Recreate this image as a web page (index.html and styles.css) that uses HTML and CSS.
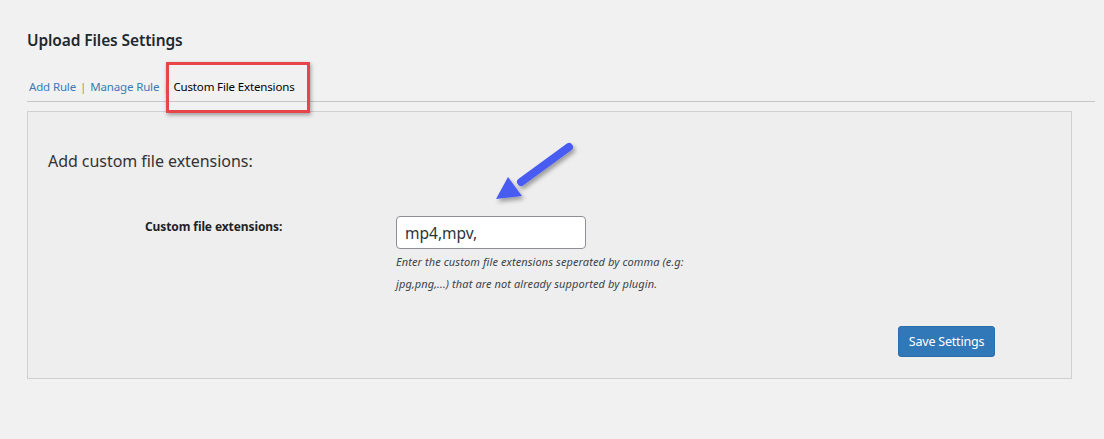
FILE: index.html
```html
<!DOCTYPE html>
<html>
<head>
<meta charset="utf-8">
<link rel="stylesheet" href="styles.css">
</head>
<body>
<div class="wrap">
  <h1 class="title">Upload Files Settings</h1>
  <nav class="tabs">
    <a class="tab" href="#">Add Rule</a><span class="sep">|</span><a class="tab" href="#">Manage Rule</a><span class="sep">|</span><span class="tab current">Custom File Extensions<span class="highlight"></span></span>
  </nav>
  <div class="panel">
    <h2 class="heading">Add custom file extensions:</h2>
    <div class="form-row">
      <label class="label" for="ext">Custom file extensions:</label>
      <div class="field">
        <input id="ext" class="input" type="text" value="mp4,mpv,">
        <p class="desc">Enter the custom file extensions seperated by comma (e.g:<br>jpg,png,...) that are not already supported by plugin.</p>
      </div>
    </div>
    <div class="actions">
      <button class="btn">Save Settings</button>
    </div>
    <svg class="arrow" width="100" height="80" viewBox="0 0 100 80">
      <defs>
        <filter id="sh" x="-30%" y="-30%" width="160%" height="160%">
          <feDropShadow dx="2" dy="3" stdDeviation="2" flood-color="#000" flood-opacity="0.35"/>
        </filter>
      </defs>
      <g filter="url(#sh)">
        <line x1="84" y1="13" x2="36" y2="48" stroke="#4a5cf2" stroke-width="8" stroke-linecap="round"/>
        <polygon points="11,65 23,43 37,62" fill="#4a5cf2"/>
      </g>
    </svg>
  </div>
</div>
</body>
</html>
```

FILE: styles.css
```css
html, body {
  margin: 0;
  padding: 0;
  background: #f1f1f1;
}
body {
  font-family: "Noto Sans", "Open Sans", sans-serif;
  color: #3c434a;
}
.wrap {
  padding: 0 9px 0 27px;
}
.title {
  margin: 0;
  padding-top: 30px;
  font-size: 15.5px;
  line-height: 20px;
  font-weight: 600;
  color: #23282d;
  letter-spacing: -0.1px;
}
.tabs {
  margin-top: 29px;
  padding: 0 0 6px 2px;
  border-bottom: 1px solid #c6c6c6;
  font-size: 11.5px;
  line-height: 16px;
  display: flex;
  align-items: center;
  letter-spacing: -0.15px;
}
.tab {
  color: #3a7ab8;
  text-decoration: none;
}
.sep {
  color: #b08a6a;
  margin: 0 4px 0 4px;
}
.current {
  color: #000;
  position: relative;
  letter-spacing: -0.15px;
}
.highlight {
  position: absolute;
  z-index: 5;
  left: -7px;
  right: -15px;
  top: -17px;
  bottom: -18px;
  border: 3px solid #e8454a;
  box-shadow: 1px 2px 4px rgba(0,0,0,0.35);
  pointer-events: none;
}
.panel {
  position: relative;
  margin: 9px 23px 0 0;
  border: 1px solid #d0d0d0;
  background: #eeeeee;
  height: 268px;
  box-sizing: border-box;
  padding: 38px 20px 0 20px;
}
.heading {
  margin: 0;
  font-size: 16px;
  line-height: 22px;
  font-weight: 400;
  color: #333;
  letter-spacing: -0.05px;
}
.form-row {
  display: grid;
  grid-template-columns: 348px 1fr;
  margin-top: 44px;
}
.label {
  padding: 3px 0 0 97px;
  font-size: 12px;
  font-weight: 700;
  color: #1d2327;
  line-height: 16px;
  letter-spacing: -0.1px;
}
.input {
  display: block;
  width: 190px;
  height: 33px;
  box-sizing: border-box;
  border: 1px solid #8c8f94;
  border-radius: 4px;
  background: #fff;
  padding: 0 8px;
  font-family: "Noto Sans", "Open Sans", sans-serif;
  font-size: 15.5px;
  color: #2c3338;
}
.desc {
  margin: 2px 0 0 0;
  font-size: 11px;
  line-height: 22px;
  font-style: italic;
  color: #3c434a;
  letter-spacing: 0.1px;
}
.actions {
  display: flex;
  justify-content: flex-end;
  padding-right: 56px;
  margin-top: 31px;
}
.btn {
  background: #3178b8;
  color: #fff;
  border: 1px solid #2c6ea9;
  border-radius: 3px;
  width: 97px;
  height: 31px;
  font-family: "Noto Sans", "Open Sans", sans-serif;
  font-size: 12.5px;
  letter-spacing: -0.2px;
  padding: 0;
}
.arrow {
  position: absolute;
  left: 457px;
  top: 22px;
}
```
